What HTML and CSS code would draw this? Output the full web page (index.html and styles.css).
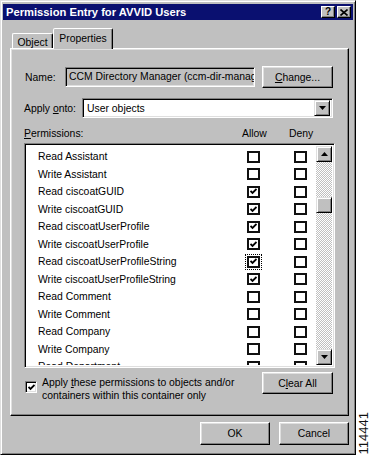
FILE: index.html
```html
<!DOCTYPE html>
<html>
<head>
<meta charset="utf-8">
<link rel="stylesheet" href="styles.css">
</head>
<body>
<div class="window">
  <div class="titlebar">
    <span class="title">Permission Entry for AVVID Users</span>
    <div class="caption-btns">
      <span class="cbtn">?</span>
      <span class="cbtn"><svg width="8" height="7" viewBox="0 0 8 7"><path d="M0.5 0.5 L7.5 6.5 M7.5 0.5 L0.5 6.5" stroke="#000" stroke-width="1.6" fill="none"/></svg></span>
    </div>
  </div>
  <div class="tabs">
    <div class="tab">Object</div>
    <div class="tab active">Properties</div>
  </div>
  <div class="panel">
    <div class="name-row">
      <span class="name-lbl">Name:</span>
      <div class="textbox">CCM Directory Manager (ccm-dir-manager)</div>
      <div class="btn change"><span><u>C</u>hange...</span></div>
    </div>
    <div class="apply-row">
      <span class="apply-lbl">Apply <u>o</u>nto:</span>
      <div class="combo">
        <span class="combo-text">User objects</span>
        <span class="arrow-btn"><svg width="7" height="4" viewBox="0 0 7 4"><path d="M0 0 H7 L3.5 4 Z" fill="#000"/></svg></span>
      </div>
    </div>
    <div class="perm-head">
      <span class="ph-name"><u>P</u>ermissions:</span>
      <span class="ph-allow">Allow</span>
      <span class="ph-deny">Deny</span>
    </div>
    <div class="listbox">
      <div class="rows">
        <div class="prow"><span>Read Assistant</span><span class="lcb"></span><span class="lcb"></span></div>
        <div class="prow"><span>Write Assistant</span><span class="lcb"></span><span class="lcb"></span></div>
        <div class="prow"><span>Read ciscoatGUID</span><span class="lcb"><svg class="chk" viewBox="0 0 7 7"><path d="M0.5 3 L2.5 5 L6.5 1" stroke="#000" stroke-width="1.8" fill="none"/></svg></span><span class="lcb"></span></div>
        <div class="prow"><span>Write ciscoatGUID</span><span class="lcb"><svg class="chk" viewBox="0 0 7 7"><path d="M0.5 3 L2.5 5 L6.5 1" stroke="#000" stroke-width="1.8" fill="none"/></svg></span><span class="lcb"></span></div>
        <div class="prow"><span>Read ciscoatUserProfile</span><span class="lcb"><svg class="chk" viewBox="0 0 7 7"><path d="M0.5 3 L2.5 5 L6.5 1" stroke="#000" stroke-width="1.8" fill="none"/></svg></span><span class="lcb"></span></div>
        <div class="prow"><span>Write ciscoatUserProfile</span><span class="lcb"><svg class="chk" viewBox="0 0 7 7"><path d="M0.5 3 L2.5 5 L6.5 1" stroke="#000" stroke-width="1.8" fill="none"/></svg></span><span class="lcb"></span></div>
        <div class="prow"><span>Read ciscoatUserProfileString</span><span class="lcb focus"><svg class="chk" viewBox="0 0 7 7"><path d="M0.5 3 L2.5 5 L6.5 1" stroke="#000" stroke-width="1.8" fill="none"/></svg></span><span class="lcb"></span></div>
        <div class="prow"><span>Write ciscoatUserProfileString</span><span class="lcb"><svg class="chk" viewBox="0 0 7 7"><path d="M0.5 3 L2.5 5 L6.5 1" stroke="#000" stroke-width="1.8" fill="none"/></svg></span><span class="lcb"></span></div>
        <div class="prow"><span>Read Comment</span><span class="lcb"></span><span class="lcb"></span></div>
        <div class="prow"><span>Write Comment</span><span class="lcb"></span><span class="lcb"></span></div>
        <div class="prow"><span>Read Company</span><span class="lcb"></span><span class="lcb"></span></div>
        <div class="prow"><span>Write Company</span><span class="lcb"></span><span class="lcb"></span></div>
        <div class="prow"><span>Read Department</span><span class="lcb"></span><span class="lcb"></span></div>
      </div>
      <div class="scrollbar">
        <span class="sbtn"><svg width="7" height="4" viewBox="0 0 7 4"><path d="M0 4 H7 L3.5 0 Z" fill="#000"/></svg></span>
        <div class="track"><span class="thumb"></span></div>
        <span class="sbtn"><svg width="7" height="4" viewBox="0 0 7 4"><path d="M0 0 H7 L3.5 4 Z" fill="#000"/></svg></span>
      </div>
    </div>
    <div class="bottom-row">
      <div class="chk-wrap">
        <span class="gcb"><svg class="chk" viewBox="0 0 7 7"><path d="M0.5 3 L2.5 5 L6.5 1" stroke="#000" stroke-width="1.8" fill="none"/></svg></span>
        <span class="chk-text">Apply <u>t</u>hese permissions to objects and/or<br>containers within this container only</span>
      </div>
      <div class="btn clear"><span>C<u>l</u>ear All</span></div>
    </div>
  </div>
  <div class="footer">
    <div class="btn ok"><span>OK</span></div>
    <div class="btn cancel"><span>Cancel</span></div>
  </div>
</div>
<div class="side"><span class="code">114441</span></div>
</body>
</html>
```
FILE: styles.css
```css
html, body {
  margin: 0;
  padding: 0;
}
body {
  background: #fff;
  display: flex;
  height: 455px;
  overflow: hidden;
  font-family: "Liberation Sans", Arial, sans-serif;
  font-size: 10.4px;
  color: #000;
}
.window {
  width: 356px;
  height: 455px;
  box-sizing: border-box;
  background: #c0c0c0;
  border: 1px solid;
  border-color: #dfdfdf #000 #000 #dfdfdf;
  box-shadow: inset 1px 1px #fff, inset -1px -1px #808080;
  padding: 3px 2px 0 2px;
  display: flex;
  flex-direction: column;
  flex-shrink: 0;
}
.titlebar {
  height: 16px;
  background: #0a1070;
  display: flex;
  align-items: center;
  justify-content: space-between;
  padding: 0 2px 0 3px;
  color: #fff;
  font-weight: bold;
  font-size: 11.2px;
}
.caption-btns {
  display: flex;
  gap: 2px;
}
.cbtn {
  width: 14px;
  height: 12px;
  box-sizing: border-box;
  background: #c0c0c0;
  border: 1px solid;
  border-color: #fff #000 #000 #fff;
  box-shadow: inset -1px -1px #808080;
  display: flex;
  align-items: center;
  justify-content: center;
  color: #000;
  font-size: 10px;
  font-weight: bold;
  line-height: 1;
}
.tabs {
  display: flex;
  align-items: flex-end;
  height: 20px;
  margin: 9px 0 -1px 9px;
}
.tab {
  height: 16px;
  width: 41px;
  box-sizing: border-box;
  border: 1px solid;
  border-bottom: none;
  border-color: #fff #000 transparent #fff;
  box-shadow: inset -1px 0 #808080;
  border-radius: 2px 2px 0 0;
  display: flex;
  align-items: center;
  justify-content: center;
  padding-top: 2px;
}
.tab.active {
  width: 60px;
  height: 21px;
  position: relative;
  z-index: 1;
  background: #c0c0c0;
  padding-top: 0;
  padding-bottom: 2px;
}
.panel {
  margin-left: 7px;
  width: 339px;
  height: 368px;
  box-sizing: border-box;
  border: 1px solid;
  border-color: #fff #000 #000 #fff;
  box-shadow: inset -1px -1px #808080, inset 1px 1px #dfdfdf;
  padding: 17px 0 0 13px;
}
.name-row {
  display: flex;
  align-items: center;
  height: 22px;
}
.name-lbl {
  width: 41px;
  padding-left: 1px;
  box-sizing: border-box;
}
.textbox {
  width: 190px;
  height: 20px;
  box-sizing: border-box;
  border: 1px solid;
  border-color: #808080 #fff #fff #808080;
  box-shadow: inset 1px 1px #000, inset -1px -1px #dfdfdf;
  background: #c0c0c0;
  padding: 0 0 0 3px;
  line-height: 18px;
  white-space: nowrap;
  overflow: hidden;
}
.btn {
  height: 22px;
  box-sizing: border-box;
  border: 1px solid;
  border-color: #fff #000 #000 #fff;
  box-shadow: inset -1px -1px #808080, inset 1px 1px #dfdfdf;
  background: #c0c0c0;
  display: flex;
  align-items: center;
  justify-content: center;
}
.change {
  width: 71px;
  margin-left: 7px;
}
.apply-row {
  display: flex;
  align-items: center;
  height: 20px;
  margin-top: 10px;
}
.apply-lbl {
  width: 58px;
}
.combo {
  width: 251px;
  height: 20px;
  box-sizing: border-box;
  border: 1px solid;
  border-color: #808080 #fff #fff #808080;
  box-shadow: inset 1px 1px #000, inset -1px -1px #dfdfdf;
  background: #fff;
  display: flex;
  align-items: center;
  justify-content: space-between;
  padding: 2px;
}
.combo-text {
  padding-left: 2px;
}
.arrow-btn, .sbtn {
  width: 16px;
  height: 16px;
  box-sizing: border-box;
  border: 1px solid;
  border-color: #dfdfdf #000 #000 #dfdfdf;
  box-shadow: inset 1px 1px #fff, inset -1px -1px #808080;
  background: #c0c0c0;
  display: flex;
  align-items: center;
  justify-content: center;
  flex-shrink: 0;
}
.perm-head {
  display: flex;
  height: 14px;
  line-height: 14px;
  margin-top: 9px;
}
.ph-name {
  width: 218px;
}
.ph-allow {
  width: 47px;
}
.listbox {
  margin-top: 2px;
  width: 311px;
  height: 225px;
  box-sizing: border-box;
  border: 1px solid;
  border-color: #808080 #fff #fff #808080;
  box-shadow: inset 1px 1px #000, inset -1px -1px #dfdfdf;
  background: #fff;
  padding: 2px 2px 2px 2px;
  display: flex;
}
.rows {
  flex: 1;
  overflow: hidden;
  padding: 2px 0 0 11px;
}
.prow {
  display: grid;
  grid-template-columns: 209px 47px 13px;
  align-items: center;
  height: 17.5px;
  line-height: 17.5px;
  white-space: nowrap;
}
.lcb {
  width: 13px;
  height: 12px;
  box-sizing: border-box;
  border: 2px solid #111;
  background: #fff;
  display: flex;
  align-items: center;
  justify-content: center;
}
.lcb.focus {
  outline: 1px dotted #000;
  outline-offset: 1px;
}
.chk {
  width: 7px;
  height: 7px;
}
.scrollbar {
  width: 16px;
  display: flex;
  flex-direction: column;
}
.track {
  flex: 1;
  background-color: #fff;
  background-image: repeating-conic-gradient(#c0c0c0 0 25%, #fff 0 50%);
  background-size: 2px 2px;
}
.thumb {
  display: block;
  width: 16px;
  height: 16px;
  margin-top: 35px;
  box-sizing: border-box;
  border: 1px solid;
  border-color: #dfdfdf #000 #000 #dfdfdf;
  box-shadow: inset 1px 1px #fff, inset -1px -1px #808080;
  background: #c0c0c0;
}
.bottom-row {
  display: flex;
  justify-content: space-between;
  width: 309px;
  margin-top: 4px;
}
.chk-wrap {
  display: flex;
  align-items: flex-start;
  margin-top: 9px;
}
.gcb {
  width: 12px;
  height: 12px;
  margin-left: 1px;
  box-sizing: border-box;
  border: 1px solid;
  border-color: #808080 #fff #fff #808080;
  box-shadow: inset 1px 1px #000, inset -1px -1px #dfdfdf;
  background: #fff;
  display: flex;
  align-items: center;
  justify-content: center;
  flex-shrink: 0;
}
.chk-text {
  margin-left: 5px;
  margin-top: -4px;
  line-height: 12.5px;
}
.clear {
  width: 71px;
}
.footer {
  display: flex;
  justify-content: flex-end;
  gap: 9px;
  margin-top: 6px;
  padding-right: 4px;
}
.footer .btn {
  width: 70px;
  height: 23px;
}
.side {
  flex: 1;
  display: flex;
  flex-direction: column;
  justify-content: flex-end;
  align-items: flex-start;
}
.code {
  writing-mode: vertical-rl;
  transform: rotate(180deg);
  font-size: 13px;
  line-height: 13px;
  margin: 0 0 1px 1px;
  color: #111;
}
```
